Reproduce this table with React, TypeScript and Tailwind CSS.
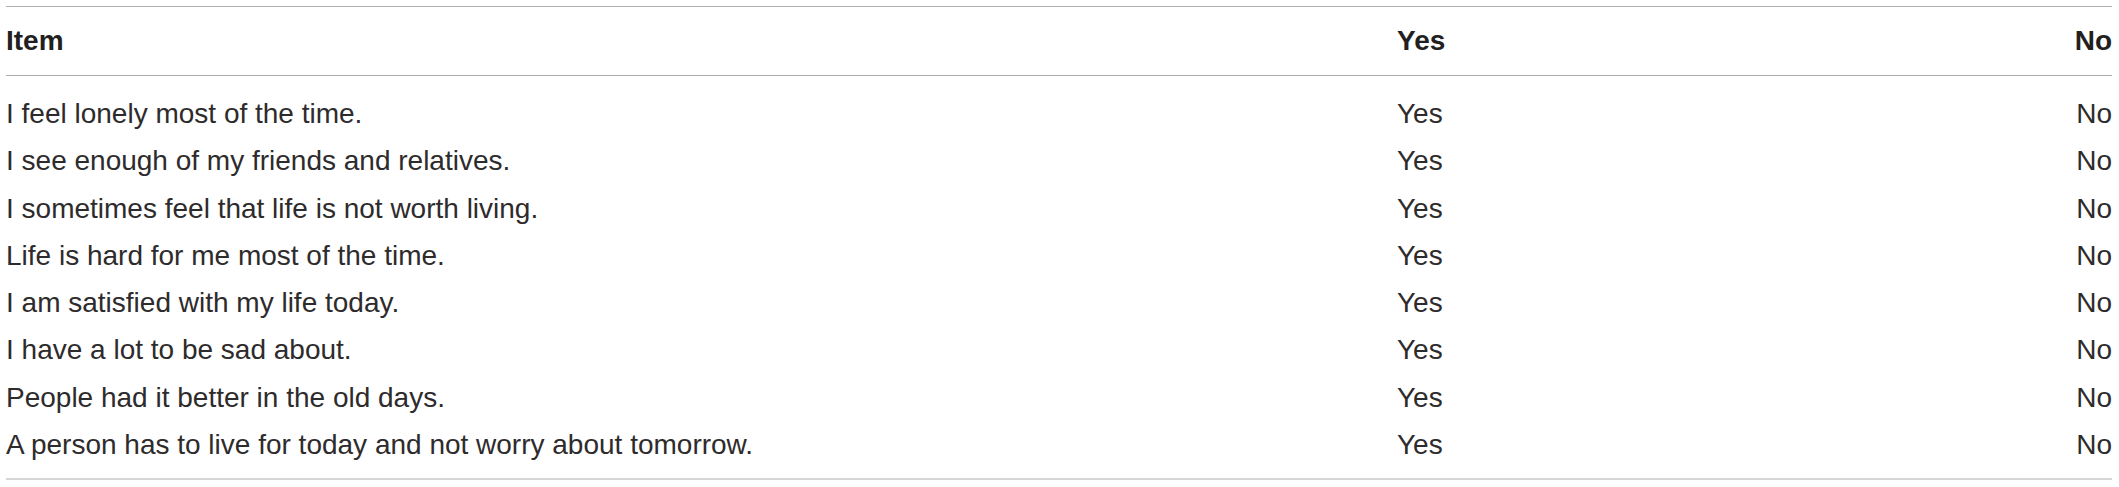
import React from "react";

const items = [
  "I feel lonely most of the time.",
  "I see enough of my friends and relatives.",
  "I sometimes feel that life is not worth living.",
  "Life is hard for me most of the time.",
  "I am satisfied with my life today.",
  "I have a lot to be sad about.",
  "People had it better in the old days.",
  "A person has to live for today and not worry about tomorrow.",
];

export default function App() {
  return (
    <div className="bg-white w-[2119px] h-[487px] pl-[6px] pr-[7px] pt-[6px] font-['Liberation_Sans',Arial,sans-serif] text-[28px]">
      <div className="border-t border-[#adadad] border-b-2 border-b-[#d6d6d6]">
        <div className="grid grid-cols-[1391px_1fr_auto] h-[69px] items-center border-b border-[#adadad] font-bold text-[#231f20]">
          <div>Item</div>
          <div>Yes</div>
          <div className="text-right">No</div>
        </div>
        <div className="pt-[14px] pb-[10px] text-[#2e2b2c]">
          {items.map((item, index) => (
            <div
              key={index}
              className="grid grid-cols-[1391px_1fr_auto] h-[47.3px] items-center leading-[47.3px]"
            >
              <div>{item}</div>
              <div>Yes</div>
              <div className="text-right">No</div>
            </div>
          ))}
        </div>
      </div>
    </div>
  );
}
